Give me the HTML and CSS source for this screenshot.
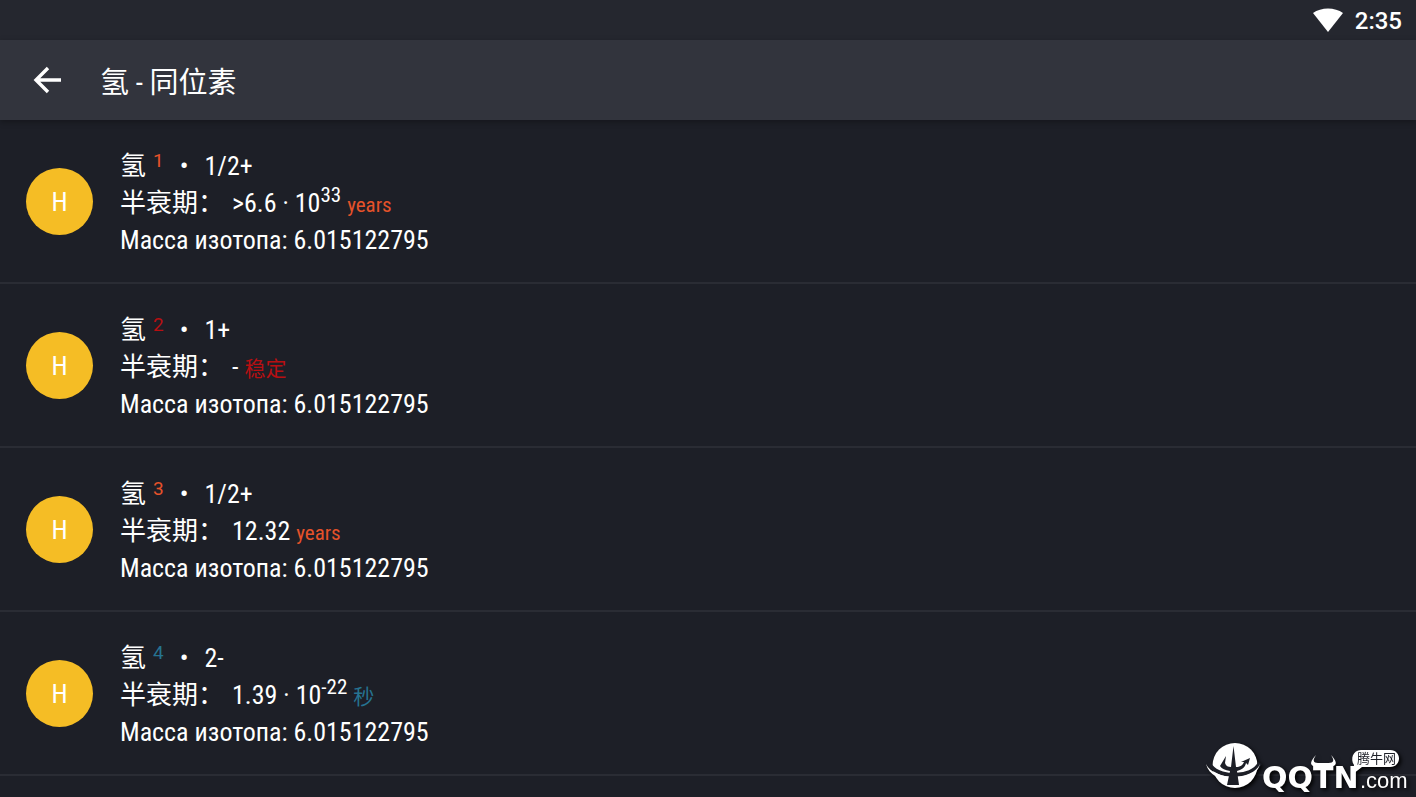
FILE: index.html
```html
<!DOCTYPE html>
<html lang="zh-CN">
<head>
  <meta charset="UTF-8">
  <meta name="viewport" content="width=device-width, initial-scale=1.0">
  <title>氢 - 同位素</title>
  <link rel="stylesheet" href="styles.css">
</head>
<body>
  <div class="status-bar">
    <svg class="wifi" viewBox="0 0 30 24" aria-hidden="true">
      <path d="M0 5C8-1 22-1 30 5L15 24Z" fill="#fff"/>
    </svg>
    <span class="clock">2:35</span>
  </div>

  <header class="toolbar">
    <button class="back" type="button" aria-label="返回">
      <svg viewBox="0 0 28 28" aria-hidden="true">
        <path d="M28 14H3M15 2L3 14L15 26" fill="none" stroke="#fff" stroke-width="3.4"/>
      </svg>
    </button>
    <h1 class="title">氢 - 同位素</h1>
  </header>

  <main>
    <ul class="isotopes">
      <li class="isotope">
        <span class="badge">H</span>
        <div class="info">
          <p><span class="name">氢</span><sup class="number orange">1</sup><span class="dot">•</span>1/2+</p>
          <p><span class="label">半衰期：</span>&gt;6.6 · 10<sup class="power">33</sup> <span class="unit orange">years</span></p>
          <p>Масса изотопа: 6.015122795</p>
        </div>
      </li>
      <li class="isotope">
        <span class="badge">H</span>
        <div class="info">
          <p><span class="name">氢</span><sup class="number red">2</sup><span class="dot">•</span>1+</p>
          <p><span class="label">半衰期：</span>- <span class="unit red">稳定</span></p>
          <p>Масса изотопа: 6.015122795</p>
        </div>
      </li>
      <li class="isotope">
        <span class="badge">H</span>
        <div class="info">
          <p><span class="name">氢</span><sup class="number orange">3</sup><span class="dot">•</span>1/2+</p>
          <p><span class="label">半衰期：</span>12.32 <span class="unit orange">years</span></p>
          <p>Масса изотопа: 6.015122795</p>
        </div>
      </li>
      <li class="isotope">
        <span class="badge">H</span>
        <div class="info">
          <p><span class="name">氢</span><sup class="number blue">4</sup><span class="dot">•</span>2-</p>
          <p><span class="label">半衰期：</span>1.39 · 10<sup class="power">-22</sup> <span class="unit blue">秒</span></p>
          <p>Масса изотопа: 6.015122795</p>
        </div>
      </li>
    </ul>
  </main>

  <svg class="watermark" viewBox="0 0 204 56" role="img" aria-label="QQTN.com 腾牛网">
    <circle cx="29" cy="24.5" r="22.5" fill="#fff"/>
    <path d="M3 22C10 38 46 38 54 22" fill="none" stroke="#1d1f27" stroke-width="4"/>
    <path d="M0 23C5 45 49 45 54 23C47 40 8 40 0 23Z" fill="#fff"/>
    <path d="M27.500 5L30 26C34 26 37 24 38 21L35 21L44 17L42 24L40 22C39 27 35 29 31 30L33 44H21L24 30C19 29 16 28 14 25L20 15L19 22C20 25 22 26 25 26Z" fill="#1d1f27"/>
    <text class="logo-main" x="56" y="47">QQTN</text>
    <text class="logo-com" x="154" y="47">.com</text>
    <path d="M110 14C99 26 109 26 117 26C126 26 136 26 125 14C131 23 124 22 117 22C111 22 104 23 110 14Z" fill="#fff"/>
    <path d="M155 9H184C196 9 196 26 184 26H156L147 33L148 24C144 18 147 9 155 9Z" fill="#fff"/>
    <text class="logo-tag" x="151" y="22">腾牛网</text>
  </svg>
</body>
</html>
```
FILE: styles.css
```css
* {
  box-sizing: border-box;
}
body {
  margin: 0;
  min-height: 100vh;
  overflow: hidden;
  background: #1d1f27;
  color: #fff;
  font-family: "Roboto Condensed", Roboto, "Noto Sans CJK SC", sans-serif;
  font-size: 26px;
}
.status-bar {
  display: flex;
  align-items: center;
  justify-content: flex-end;
  gap: 12px;
  height: 40px;
  padding: 0 14px;
  background: #25272f;
}
.wifi {
  width: 30px;
  height: 24px;
}
.clock {
  padding-top: 2px;
  font-family: Roboto, sans-serif;
  font-size: 24px;
  font-weight: 500;
}
.toolbar {
  display: flex;
  align-items: center;
  gap: 39px;
  height: 80px;
  padding: 0 33px;
  background: #32343d;
  box-shadow: 0 2px 6px rgba(0, 0, 0, 0.3);
}
.back {
  display: flex;
  padding: 0;
  border: none;
  background: none;
  cursor: pointer;
}
.back svg {
  width: 28px;
  height: 28px;
}
.title {
  margin: 0;
  font-size: 29px;
  font-weight: 400;
}
.isotopes {
  margin: 0;
  padding: 0;
  list-style: none;
}
.isotope {
  display: flex;
  align-items: center;
  gap: 27px;
  padding: 24px 26px 23px;
  border-bottom: 2px solid #2a2c34;
}
.badge {
  display: flex;
  align-items: center;
  justify-content: center;
  flex: none;
  width: 67px;
  height: 67px;
  border-radius: 50%;
  background: #f5bd25;
}
.info {
  padding-top: 4px;
}
.info p {
  margin: 0;
  line-height: 37px;
  white-space: nowrap;
}
.label {
  margin-right: 8px;
}
sup {
  line-height: 0;
}
.number {
  margin-left: 7px;
  font-family: Roboto, sans-serif;
  font-size: 19px;
  vertical-align: 8px;
}
.dot {
  margin: 0 16px;
}
.power {
  font-size: 21px;
  vertical-align: 10px;
}
.unit {
  font-size: 21px;
  line-height: 0;
}
.orange {
  color: #e5522a;
}
.red {
  color: #b80f12;
}
.blue {
  color: #267391;
}
.watermark {
  position: fixed;
  right: 6px;
  bottom: 0;
  width: 204px;
  height: 56px;
  filter: drop-shadow(2px 2px 2px #000);
}
.logo-main,
.logo-com {
  fill: #fff;
}
.logo-main {
  font: 700 30px "DejaVu Sans", sans-serif;
}
.logo-com {
  font: 22px "Liberation Sans", sans-serif;
}
.logo-tag {
  fill: #1d1f27;
  font: 13px "Noto Sans CJK SC", sans-serif;
}
```
